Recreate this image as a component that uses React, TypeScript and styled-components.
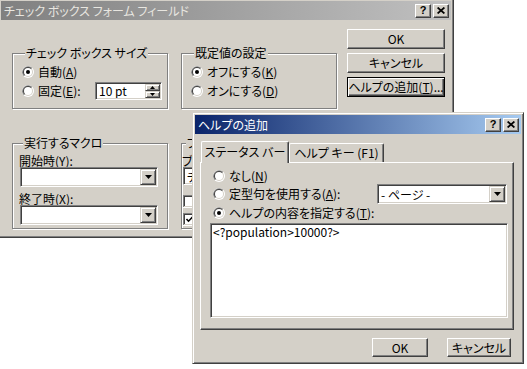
import React from "react";
import styled, { createGlobalStyle, css } from "styled-components";

const FACE = "#d4d0c8";
const SHADOW = "#808080";
const DARK = "#404040";

const GlobalStyle = createGlobalStyle`
  html, body {
    margin: 0;
    padding: 0;
    background: #ffffff;
  }
  body {
    font-family: "Noto Sans CJK JP", "Liberation Sans", sans-serif;
    font-size: 12px;
    font-feature-settings: "palt";
    color: #000000;
  }
  * {
    box-sizing: border-box;
  }
`;

const Desktop = styled.div`
  position: relative;
  width: 527px;
  height: 369px;
  overflow: hidden;
  background: #ffffff;
`;

// 데스크톱 위의 창 (위치 자체가 내용)
const Window = styled.div<{ $x: number; $y: number; $w: number; $h: number }>`
  position: absolute;
  left: ${(p) => p.$x}px;
  top: ${(p) => p.$y}px;
  width: ${(p) => p.$w}px;
  height: ${(p) => p.$h}px;
  padding: 2px;
  background: ${FACE};
  border: 1px solid;
  border-color: ${FACE} ${DARK} ${DARK} ${FACE};
  box-shadow: inset 1px 1px #ffffff, inset -1px -1px ${SHADOW};
  display: flex;
  flex-direction: column;
`;

const TitleBar = styled.div<{ $active?: boolean }>`
  flex: none;
  height: 19px;
  display: flex;
  align-items: center;
  padding: 0 2px 0 3px;
  background: ${(p) =>
    p.$active
      ? "linear-gradient(to right, #0a246a, #a6caf0)"
      : "linear-gradient(to right, #808080, #c0c0c0)"};
`;

const TitleText = styled.span<{ $active?: boolean }>`
  flex: 1;
  font-size: 12px;
  line-height: 19px;
  white-space: nowrap;
  color: ${(p) => (p.$active ? "#ffffff" : "#e8e6e0")};
`;

const CaptionButtons = styled.div`
  display: flex;
  gap: 2px;
`;

const CaptionButton = styled.span`
  width: 16px;
  height: 14px;
  display: flex;
  align-items: center;
  justify-content: center;
  background: ${FACE};
  border: 1px solid;
  border-color: #ffffff ${DARK} ${DARK} #ffffff;
  box-shadow: inset -1px -1px ${SHADOW};
  font-family: "Liberation Sans", Arial, sans-serif;
  font-weight: bold;
  font-size: 11px;
  line-height: 1;
  color: #000;
`;

const MainBody = styled.div`
  display: flex;
  padding-left: 11px;
`;

const GroupGrid = styled.div`
  display: grid;
  grid-template-columns: 156px 156px;
  column-gap: 13px;
  row-gap: 27px;
  padding-top: 26px;
`;

const ButtonColumn = styled.div`
  display: flex;
  flex-direction: column;
  gap: 4px;
  margin-left: 10px;
  padding-top: 9px;
`;

const Group = styled.fieldset<{ $h: number; $pl?: number }>`
  margin: 0;
  min-width: 0;
  height: ${(p) => p.$h}px;
  padding: 0 4px 0 ${(p) => p.$pl ?? 9}px;
  border: 1px solid ${SHADOW};
  box-shadow: 1px 1px 0 #ffffff, inset 1px 1px 0 #ffffff;
  display: flex;
  flex-direction: column;
`;

const Legend = styled.legend`
  margin-left: 3px;
  padding: 0 1px;
  line-height: 14px;
  font-size: 12px;
  background: ${FACE};
  white-space: nowrap;
`;

const GroupRows = styled.div<{ $pt: number }>`
  display: flex;
  flex-direction: column;
  padding-top: ${(p) => p.$pt}px;
`;

const Row = styled.div<{ $h: number }>`
  display: flex;
  align-items: center;
  height: ${(p) => p.$h}px;
`;

const Choice = styled.label<{ $w?: number }>`
  display: flex;
  align-items: center;
  gap: 4px;
  line-height: 14px;
  white-space: nowrap;
  ${(p) =>
    p.$w &&
    css`
      width: ${p.$w}px;
      flex: none;
    `}
`;

const FieldLabel = styled.div`
  height: 13px;
  line-height: 13px;
  margin-left: -1px;
  white-space: nowrap;
`;

const sunken = css`
  background: #ffffff;
  border: 1px solid;
  border-color: ${SHADOW} #ffffff #ffffff ${SHADOW};
  box-shadow: inset 1px 1px ${DARK}, inset -1px -1px ${FACE};
`;

const raised = css`
  background: ${FACE};
  border: 1px solid;
  border-color: ${FACE} ${DARK} ${DARK} ${FACE};
  box-shadow: inset 1px 1px #ffffff, inset -1px -1px ${SHADOW};
`;

const Combo = styled.div<{ $w: number; $h?: number }>`
  ${sunken};
  flex: none;
  width: ${(p) => p.$w}px;
  height: ${(p) => p.$h ?? 20}px;
  padding: 1px;
  display: flex;
`;

const FieldText = styled.span`
  flex: 1;
  padding-left: 2px;
  display: flex;
  align-items: center;
  white-space: nowrap;
  overflow: hidden;
`;

const DropButton = styled.span`
  ${raised};
  flex: none;
  width: 16px;
  display: flex;
  align-items: center;
  justify-content: center;
`;

const SpinButtons = styled.span`
  flex: none;
  width: 15px;
  display: flex;
  flex-direction: column;
`;

const SpinHalf = styled.span`
  ${raised};
  flex: 1;
  display: flex;
  align-items: center;
  justify-content: center;
`;

const PushButton = styled.button<{ $w: number; $h?: number; $focus?: boolean }>`
  width: ${(p) => p.$w}px;
  height: ${(p) => p.$h ?? 20}px;
  margin: 0;
  padding: 0;
  font: inherit;
  font-size: 12px;
  line-height: 14px;
  color: #000;
  background: ${FACE};
  border: 1px solid;
  border-color: #ffffff ${DARK} ${DARK} #ffffff;
  box-shadow: inset -1px -1px ${SHADOW};
  white-space: nowrap;
  ${(p) =>
    p.$focus &&
    css`
      border-color: #000;
      box-shadow: inset 1px 1px #ffffff, inset -1px -1px ${DARK},
        inset -2px -2px ${SHADOW};
    `}
`;

const DialogBody = styled.div`
  display: flex;
  flex-direction: column;
  padding: 7px 10px 0 5px;
`;

const TabStrip = styled.div`
  display: flex;
  align-items: flex-end;
  height: 21px;
  padding-left: 1px;
`;

const Tab = styled.div<{ $active?: boolean; $w: number }>`
  position: relative;
  z-index: ${(p) => (p.$active ? 1 : 0)};
  width: ${(p) => p.$w}px;
  height: ${(p) => (p.$active ? 22 : 19)}px;
  margin-bottom: ${(p) => (p.$active ? -1 : 0)}px;
  background: ${FACE};
  border: 1px solid;
  border-bottom: none;
  border-color: #ffffff ${DARK} ${DARK} #ffffff;
  border-radius: 2px 2px 0 0;
  box-shadow: inset -1px 0 ${SHADOW};
  display: flex;
  align-items: center;
  justify-content: center;
  padding-bottom: ${(p) => (p.$active ? 1 : 0)}px;
  line-height: 14px;
  white-space: nowrap;
`;

const TabPanel = styled.div`
  width: 314px;
  height: 168px;
  border: 1px solid;
  border-color: #ffffff ${DARK} ${DARK} #ffffff;
  box-shadow: inset -1px -1px ${SHADOW};
  padding: 5px 6px 0 9px;
  display: flex;
  flex-direction: column;
`;

const PanelRow = styled(Row)`
  padding-left: 3px;
`;

const Spacer = styled.div`
  flex: 1;
`;

const TextArea = styled.div`
  ${sunken};
  width: 298px;
  height: 95px;
  margin-top: 2px;
  padding: 1px 2px;
  line-height: 14px;
`;

const DialogButtons = styled.div`
  display: flex;
  justify-content: flex-end;
  gap: 19px;
  margin-top: 8px;
`;

function RadioMark({ checked }: { checked?: boolean }) {
  return (
    <svg width="12" height="12" viewBox="0 0 12 12">
      <circle cx="6" cy="6" r="6" fill="#ffffff" />
      <path d="M1.76 10.24A6 6 0 0 1 10.24 1.76Z" fill={SHADOW} />
      <circle cx="6" cy="6" r="5" fill={FACE} />
      <path d="M2.46 9.54A5 5 0 0 1 9.54 2.46Z" fill={DARK} />
      <circle cx="6" cy="6" r="4" fill="#ffffff" />
      {checked && <circle cx="6" cy="6" r="2" fill="#000000" />}
    </svg>
  );
}

function CheckMark({ checked }: { checked?: boolean }) {
  return (
    <svg width="13" height="13" viewBox="0 0 13 13">
      <rect width="13" height="13" fill="#ffffff" />
      <rect width="12" height="12" fill={SHADOW} />
      <rect x="1" y="1" width="11" height="11" fill={FACE} />
      <rect x="1" y="1" width="10" height="10" fill={DARK} />
      <rect x="2" y="2" width="9" height="9" fill="#ffffff" />
      {checked && (
        <path d="M3.5 6 L5.5 8.2 L9.5 4" stroke="#000" strokeWidth="1.6" fill="none" />
      )}
    </svg>
  );
}

function DownArrow() {
  return (
    <svg width="7" height="4" viewBox="0 0 7 4">
      <polygon points="0,0 7,0 3.5,4" fill="#000" />
    </svg>
  );
}

function SmallArrow({ up }: { up?: boolean }) {
  return (
    <svg width="5" height="3" viewBox="0 0 5 3">
      <polygon points={up ? "0,3 5,3 2.5,0" : "0,0 5,0 2.5,3"} fill="#000" />
    </svg>
  );
}

function CloseGlyph() {
  return (
    <svg width="8" height="7" viewBox="0 0 8 7">
      <path d="M0.6 0.5 L7.4 6.5 M7.4 0.5 L0.6 6.5" stroke="#000" strokeWidth="1.7" />
    </svg>
  );
}

function Caption({ title, active }: { title: string; active?: boolean }) {
  return (
    <TitleBar $active={active}>
      <TitleText $active={active}>{title}</TitleText>
      <CaptionButtons>
        <CaptionButton>?</CaptionButton>
        <CaptionButton>
          <CloseGlyph />
        </CaptionButton>
      </CaptionButtons>
    </TitleBar>
  );
}

function DropDown({ w, text }: { w: number; text?: string }) {
  return (
    <Combo $w={w}>
      <FieldText>{text}</FieldText>
      <DropButton>
        <DownArrow />
      </DropButton>
    </Combo>
  );
}

function CheckBoxFieldDialog() {
  return (
    <Window $x={-2} $y={-2} $w={456} $h={240}>
      <Caption title="チェック ボックス フォーム フィールド" />
      <MainBody>
        <GroupGrid>
          <Group $h={63}>
            <Legend>チェック ボックス サイズ</Legend>
            <GroupRows $pt={2}>
              <Row $h={19}>
                <Choice>
                  <RadioMark checked />
                  <span>
                    自動(<u>A</u>)
                  </span>
                </Choice>
              </Row>
              <Row $h={19}>
                <Choice $w={73}>
                  <RadioMark />
                  <span>
                    固定(<u>E</u>):
                  </span>
                </Choice>
                <Combo $w={67} $h={18}>
                  <FieldText>10 pt</FieldText>
                  <SpinButtons>
                    <SpinHalf>
                      <SmallArrow up />
                    </SpinHalf>
                    <SpinHalf>
                      <SmallArrow />
                    </SpinHalf>
                  </SpinButtons>
                </Combo>
              </Row>
            </GroupRows>
          </Group>

          <Group $h={63}>
            <Legend>既定値の設定</Legend>
            <GroupRows $pt={2}>
              <Row $h={19}>
                <Choice>
                  <RadioMark checked />
                  <span>
                    オフにする(<u>K</u>)
                  </span>
                </Choice>
              </Row>
              <Row $h={19}>
                <Choice>
                  <RadioMark />
                  <span>
                    オンにする(<u>D</u>)
                  </span>
                </Choice>
              </Row>
            </GroupRows>
          </Group>

          <Group $h={93} $pl={7}>
            <Legend>実行するマクロ</Legend>
            <GroupRows $pt={4}>
              <FieldLabel>
                開始時(<u>Y</u>):
              </FieldLabel>
              <DropDown w={138} />
              <Row $h={5} />
              <FieldLabel>
                終了時(<u>X</u>):
              </FieldLabel>
              <DropDown w={138} />
            </GroupRows>
          </Group>

          <Group $h={93} $pl={1}>
            <Legend>フィールドの設定</Legend>
            <GroupRows $pt={4}>
              <FieldLabel>
                ブックマーク(<u>B</u>):
              </FieldLabel>
              <Combo $w={140} $h={18}>
                <FieldText>チェック1</FieldText>
              </Combo>
              <Row $h={7} />
              <Row $h={18}>
                <Choice>
                  <CheckMark />
                  <span>
                    終了時に再計算(<u>R</u>)
                  </span>
                </Choice>
              </Row>
              <Row $h={18}>
                <Choice>
                  <CheckMark checked />
                  <span>
                    チェック ボックスを有効にする(<u>C</u>)
                  </span>
                </Choice>
              </Row>
            </GroupRows>
          </Group>
        </GroupGrid>

        <ButtonColumn>
          <PushButton $w={98}>OK</PushButton>
          <PushButton $w={98}>キャンセル</PushButton>
          <PushButton $w={98} $focus>
            ヘルプの追加(<u>T</u>)...
          </PushButton>
        </ButtonColumn>
      </MainBody>
    </Window>
  );
}

function AddHelpDialog() {
  return (
    <Window $x={192} $y={112} $w={332} $h={252}>
      <Caption title="ヘルプの追加" active />
      <DialogBody>
        <TabStrip>
          <Tab $active $w={88}>
            ステータス バー
          </Tab>
          <Tab $w={95}>ヘルプ キー (F1)</Tab>
        </TabStrip>
        <TabPanel>
          <PanelRow $h={16}>
            <Choice>
              <RadioMark />
              <span>
                なし(<u>N</u>)
              </span>
            </Choice>
          </PanelRow>
          <PanelRow $h={20}>
            <Choice>
              <RadioMark />
              <span>
                定型句を使用する(<u>A</u>):
              </span>
            </Choice>
            <Spacer />
            <DropDown w={130} text="- ページ -" />
          </PanelRow>
          <PanelRow $h={17}>
            <Choice>
              <RadioMark checked />
              <span>
                ヘルプの内容を指定する(<u>T</u>):
              </span>
            </Choice>
          </PanelRow>
          <TextArea>&lt;?population&gt;10000?&gt;</TextArea>
        </TabPanel>
        <DialogButtons>
          <PushButton $w={56} $h={19}>
            OK
          </PushButton>
          <PushButton $w={64} $h={19}>
            キャンセル
          </PushButton>
        </DialogButtons>
      </DialogBody>
    </Window>
  );
}

export default function App() {
  return (
    <>
      <GlobalStyle />
      <Desktop>
        <CheckBoxFieldDialog />
        <AddHelpDialog />
      </Desktop>
    </>
  );
}
